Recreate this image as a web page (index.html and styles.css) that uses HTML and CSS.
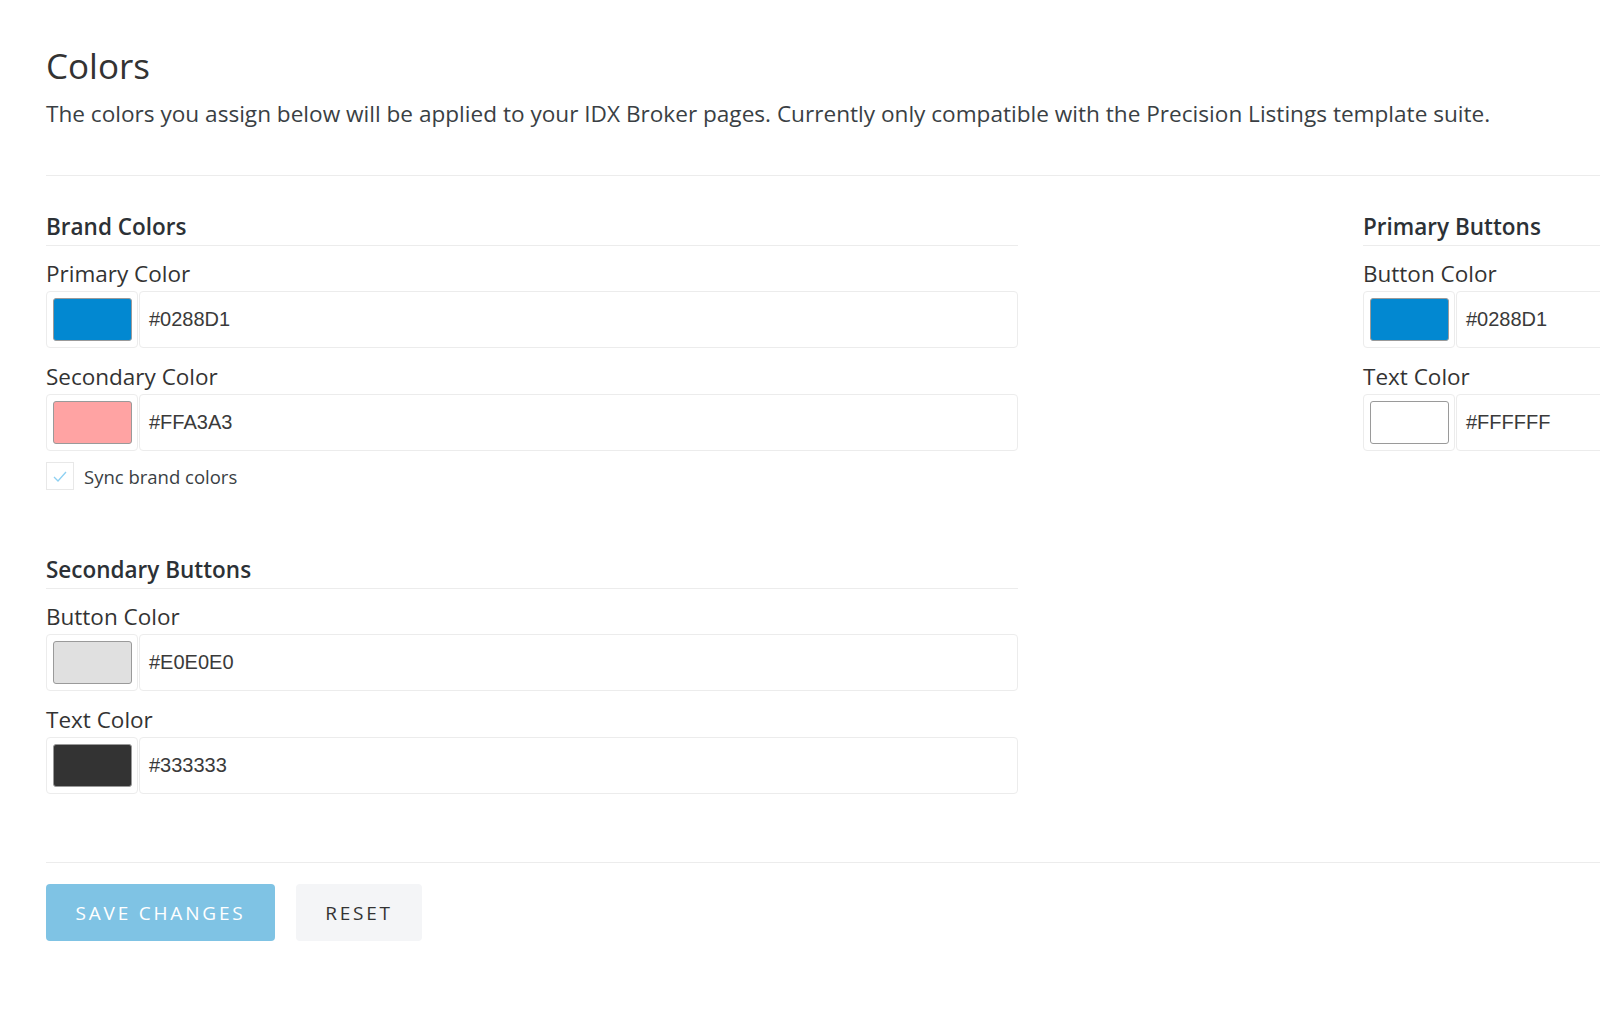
FILE: index.html
```html
<!DOCTYPE html>
<html lang="en">
<head>
<meta charset="utf-8">
<title>Colors</title>
<link rel="stylesheet" href="styles.css">
</head>
<body>
<div class="page">
  <header class="intro">
    <h1 class="title">Colors</h1>
    <p class="lead">The colors you assign below will be applied to your IDX Broker pages. Currently only compatible with the Precision Listings template suite.</p>
  </header>
  <hr class="rule">
  <div class="columns">
    <div class="col">
      <section class="group">
        <h2 class="group-title">Brand Colors</h2>
        <div class="field">
          <label class="field-label">Primary Color</label>
          <div class="input-group">
            <span class="addon"><span class="swatch" style="background:#0288D1"></span></span>
            <span class="hex">#0288D1</span>
          </div>
        </div>
        <div class="field">
          <label class="field-label">Secondary Color</label>
          <div class="input-group">
            <span class="addon"><span class="swatch" style="background:#FFA3A3"></span></span>
            <span class="hex">#FFA3A3</span>
          </div>
        </div>
        <div class="check-row">
          <span class="checkbox"><svg width="18" height="18" viewBox="0 0 18 18"><polyline points="3,10 7,14 15,5" fill="none" stroke="#8dd0f2" stroke-width="1.3"/></svg></span>
          <span class="check-label">Sync brand colors</span>
        </div>
      </section>
      <section class="group group-secondary">
        <h2 class="group-title">Secondary Buttons</h2>
        <div class="field">
          <label class="field-label">Button Color</label>
          <div class="input-group">
            <span class="addon"><span class="swatch" style="background:#E0E0E0"></span></span>
            <span class="hex">#E0E0E0</span>
          </div>
        </div>
        <div class="field">
          <label class="field-label">Text Color</label>
          <div class="input-group">
            <span class="addon"><span class="swatch" style="background:#333333"></span></span>
            <span class="hex">#333333</span>
          </div>
        </div>
      </section>
    </div>
    <div class="col">
      <section class="group">
        <h2 class="group-title">Primary Buttons</h2>
        <div class="field">
          <label class="field-label">Button Color</label>
          <div class="input-group">
            <span class="addon"><span class="swatch" style="background:#0288D1"></span></span>
            <span class="hex">#0288D1</span>
          </div>
        </div>
        <div class="field">
          <label class="field-label">Text Color</label>
          <div class="input-group">
            <span class="addon"><span class="swatch" style="background:#FFFFFF"></span></span>
            <span class="hex">#FFFFFF</span>
          </div>
        </div>
      </section>
    </div>
  </div>
  <hr class="rule rule-bottom">
  <div class="actions">
    <button class="btn btn-save">Save Changes</button>
    <button class="btn btn-reset">Reset</button>
  </div>
</div>
</body>
</html>
```
FILE: styles.css
```css
html, body {
  margin: 0;
  padding: 0;
  background: #ffffff;
  overflow: hidden;
}
body {
  font-family: "Open Sans", "Liberation Sans", sans-serif;
  color: #333333;
}
.page {
  width: 2289px;
  padding: 44px 0 0 46px;
}
.title {
  margin: 0;
  font-size: 35px;
  line-height: 44px;
  font-weight: 400;
  color: #333333;
}
.lead {
  margin: 11px 0 0;
  font-size: 22.6px;
  line-height: 30px;
  color: #3a3f44;
  white-space: nowrap;
}
.rule {
  border: 0;
  border-top: 1px solid #ececec;
  margin: 46px 0 0;
}
.columns {
  display: grid;
  grid-template-columns: 972px 972px;
  column-gap: 345px;
  margin-top: 36px;
}
.group-title {
  margin: 0;
  font-size: 22.5px;
  line-height: 30px;
  font-weight: 600;
  color: #2c3136;
  padding-bottom: 3px;
  border-bottom: 1px solid #ececec;
}
.field {
  margin-top: 13px;
}
.field + .field {
  margin-top: 14px;
}
.field-label {
  display: block;
  font-size: 22.5px;
  line-height: 30px;
  color: #333333;
  margin-bottom: 2px;
}
.input-group {
  display: flex;
  height: 57px;
  gap: 1px;
}
.addon {
  width: 92px;
  box-sizing: border-box;
  border: 1px solid #ececec;
  border-radius: 4px;
  padding: 6px 5px 6px 6px;
  display: flex;
}
.swatch {
  flex: 1;
  border: 1px solid #9a9a9a;
  border-radius: 3px;
}
.hex {
  flex: 1;
  box-sizing: border-box;
  border: 1px solid #ececec;
  border-radius: 4px;
  display: flex;
  align-items: center;
  padding-left: 9px;
  font-family: "Liberation Sans", Arial, sans-serif;
  font-size: 20px;
  color: #3a3a3a;
}
.check-row {
  display: flex;
  align-items: center;
  gap: 10px;
  margin-top: 11px;
}
.checkbox {
  width: 28px;
  height: 28px;
  box-sizing: border-box;
  border: 1px solid #e8e8e8;
  display: flex;
  align-items: center;
  justify-content: center;
}
.check-label {
  font-size: 18.5px;
  color: #3a3f44;
}
.group-secondary {
  margin-top: 65px;
}
.rule-bottom {
  margin-top: 68px;
}
.actions {
  display: flex;
  gap: 21px;
  margin-top: 21px;
}
.btn {
  height: 57px;
  border: 0;
  border-radius: 4px;
  font-family: "Open Sans", "Liberation Sans", sans-serif;
  font-size: 19px;
  letter-spacing: 2.8px;
  text-transform: uppercase;
  cursor: pointer;
}
.btn-save {
  width: 229px;
  background: #7fc3e4;
  color: #ffffff;
}
.btn-reset {
  width: 126px;
  background: #f4f5f7;
  color: #333333;
}
```
